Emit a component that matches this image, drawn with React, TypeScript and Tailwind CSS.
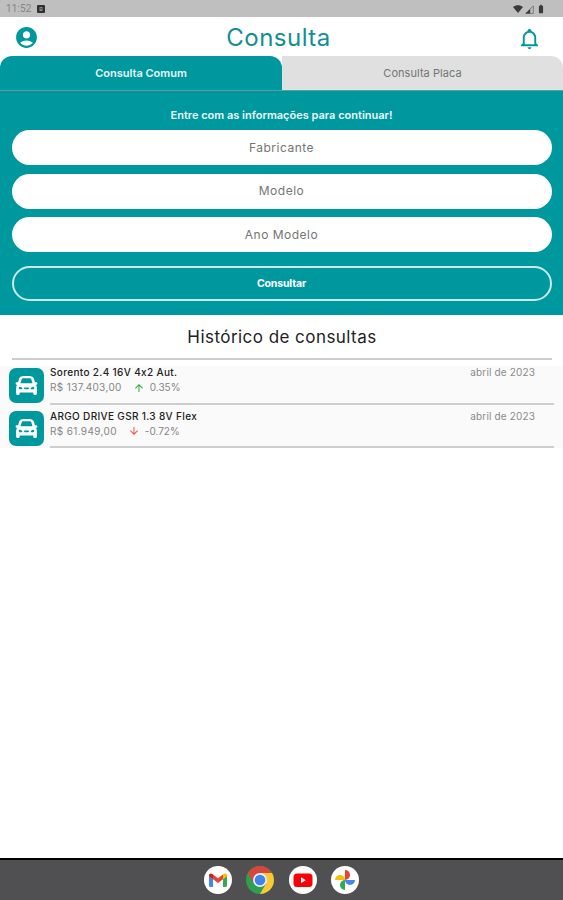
import React from 'react';
import { MdAccountCircle, MdBatteryFull, MdArrowUpward, MdArrowDownward } from 'react-icons/md';

interface HistoryItem {
  name: string;
  price: string;
  change: string;
  up: boolean;
  date: string;
}

const history: HistoryItem[] = [
  { name: 'Sorento 2.4 16V 4x2 Aut.', price: 'R$ 137.403,00', change: '0.35%', up: true, date: 'abril de 2023' },
  { name: 'ARGO DRIVE GSR 1.3 8V Flex', price: 'R$ 61.949,00', change: '-0.72%', up: false, date: 'abril de 2023' },
];

const fields = ['Fabricante', 'Modelo', 'Ano Modelo'];

const StatusBar = () => (
  <div className="flex h-[17px] items-center justify-between bg-[#bfbfbf] pl-[6px] pr-[17px] pt-px">
    <div className="flex items-center gap-[6px]">
      <span className="font-['Roboto',sans-serif] text-[10px] leading-none tracking-[0.1px] text-[#858585]">11:52</span>
      <svg viewBox="0 0 8 8" className="h-2 w-2">
        <rect width="8" height="8" rx="1" fill="#303030" />
        <path d="M2.5 2h3v4h-3z" fill="#8a8a8a" />
        <path d="M3.3 3.2h1.4v1H3.3z" fill="#303030" />
      </svg>
    </div>
    <div className="flex items-center text-[#3a3a3a]">
      <svg viewBox="0 0 10 8" className="h-2 w-[10px]">
        <path d="M0 2C3-.5 7-.5 10 2L5 8z" fill="#3a3a3a" />
      </svg>
      <svg viewBox="0 0 9 9" className="ml-[2px] h-[9px] w-[9px]">
        <path d="M.8 8.4 8.3.9v7.5z" fill="none" stroke="#6a6a6a" strokeWidth=".8" />
        <path d="M.5 8.5 5.2 4v4.5z" fill="#3a3a3a" />
      </svg>
      <MdBatteryFull className="ml-[2px] h-[10px] w-[10px]" />
    </div>
  </div>
);

const Header = () => (
  <header className="flex h-[39px] items-center justify-between pl-[14px] pr-[22px]">
    <MdAccountCircle className="mt-px h-[25px] w-[25px] text-[#00989f]" />
    <h1 className="pt-[2px] text-[24px] leading-none tracking-[0.5px] text-[#128e94]">Consulta</h1>
    <svg viewBox="0 0 24 24" className="mt-1 h-[23px] w-[23px] text-[#00989f]" fill="currentColor">
      <path d="M10 21h4c0 1.1-.9 2-2 2s-2-.9-2-2m11-2v1H3v-1l2-2v-6c0-3.1 2.03-5.83 5-6.71V4a2 2 0 0 1 4 0v.29c2.97.88 5 3.61 5 6.71v6l2 2m-4-8a5 5 0 0 0-10 0v7h10z" />
    </svg>
  </header>
);

const Tabs = () => (
  <div className="flex h-[35px] overflow-hidden rounded-tr-xl border-b border-[#58a0a4] bg-[#e0e0e0] text-[11px]">
    <div className="w-[282px] bg-white">
      <div className="flex h-full items-center justify-center rounded-t-xl bg-[#00989f] font-semibold text-[#e6f5f5]">
        <span>Consulta Comum</span>
      </div>
    </div>
    <div className="flex flex-1 items-center justify-center text-[#757575]">
      <span className="tracking-[0.05px]">Consulta Placa</span>
    </div>
  </div>
);

const SearchForm = () => (
  <section className="flex h-[224px] flex-col bg-[#00989f] px-[11.5px] pt-[17px] text-center">
    <p className="text-[11px] font-semibold leading-[14px] text-[#e9f7f7]">Entre com as informações para continuar!</p>
    <div className="mt-2 flex flex-col gap-[8.5px]">
      {fields.map((field) => (
        <button key={field} className="h-[35px] rounded-full bg-white text-[12px] tracking-[0.5px] text-[#757575]">
          {field}
        </button>
      ))}
    </div>
    <button className="mt-[14px] h-[35px] rounded-full border-2 border-[#c8e9ea] text-[10.5px] font-bold tracking-[-0.15px] text-white">
      Consultar
    </button>
  </section>
);

const CarIcon = () => (
  <div className="flex h-[35px] w-[35px] shrink-0 items-center justify-center rounded-[7px] bg-[#00989f]">
    <svg viewBox="0 0 24 22" className="h-[21px] w-[23px]">
      <path
        fillRule="evenodd"
        fill="#fff"
        d="M9 1h6c2.600 0 4.200 1.100 4.900 3.300l.9 3.200h1.100c.9 0 1.500.5 1.500 1.300s-.5 1.300-1.300 1.300h-.3c.7 1 1.100 2.100 1.100 3.400V19c0 1.300-.7 2-1.900 2s-1.900-.7-1.900-2v-.6H4.900v.6c0 1.300-.7 2-1.900 2s-1.900-.7-1.900-2v-5.500c0-1.300.4-2.400 1.100-3.400h-.3C1.100 10.100.6 9.600.6 8.800s.6-1.300 1.500-1.300h1.100l.9-3.200C4.800 2.100 6.400 1 9 1zm.1 2.400c-1.300 0-2 .5-2.300 1.500L5.700 8.600h12.600l-1.100-3.700c-.3-1-1-1.500-2.300-1.500zM5.200 12.200a1.300 1.300 0 0 0 0 2.600h1.700c.7 0 .9-.6.5-1.200-.5-.8-1.300-1.300-2.200-1.400zm13.600 0c-.9.1-1.700.6-2.200 1.400-.4.6-.2 1.200.5 1.200h1.700a1.300 1.300 0 0 0 0-2.600zM10.200 13c-.6 0-.9.4-.9.900s.3.900.9.900h3.600c.6 0 .9-.4.9-.9s-.3-.9-.9-.9z"
      />
    </svg>
  </div>
);

const HistoryRow = ({ item }: { item: HistoryItem }) => (
  <div className="flex h-[43.5px] pl-[9px] pr-[9px]">
    <div className="pt-[1.5px]">
      <CarIcon />
    </div>
    <div className="ml-[6px] h-[38.5px] flex-1 border-b-2 border-[#cecece]">
      <div className="flex justify-between pr-[19px] text-[10px] leading-[13px]">
        <span className="font-medium tracking-[0.34px] text-[#222] [font-feature-settings:'calt'_0]">{item.name}</span>
        <span className="tracking-[0.15px] text-[#8a8a8a]">{item.date}</span>
      </div>
      <div className="flex items-center pt-px text-[10px] leading-[15px] text-[#858585]">
        <span className="tracking-[0.35px]">{item.price}</span>
        {item.up ? (
          <MdArrowUpward className="ml-[11px] h-3 w-3 text-[#2fae43]" />
        ) : (
          <MdArrowDownward className="ml-[11px] h-3 w-3 text-[#f0524a]" />
        )}
        <span className="ml-[5px]">{item.change}</span>
      </div>
    </div>
  </div>
);

const GmailIcon = () => (
  <svg viewBox="0 0 28 28" className="h-7 w-7">
    <circle cx="14" cy="14" r="14" fill="#fff" />
    <path d="M5 10v9.5c0 .8.6 1.5 1.5 1.5H9v-8z" fill="#4285f4" />
    <path d="M23 10v9.5c0 .8-.6 1.5-1.5 1.500H19v-8z" fill="#34a853" />
    <path d="M9 8.5v4.8l5 3.7 5-3.7V8.5l-5 3.7z" fill="#ea4335" />
    <path d="M5 9.5c0-2 2.3-2.6 4-1v4.8l-4-3z" fill="#c5221f" />
    <path d="M23 9.5c0-2-2.3-2.600-4-1v4.800l4-3z" fill="#fbbc04" />
  </svg>
);

const ChromeIcon = () => (
  <svg viewBox="0 0 28 28" className="h-7 w-7">
    <circle cx="14" cy="14" r="14" fill="#2f9e4f" />
    <path d="M14 14V7h12.1A14 14 0 0 0 1.9 7L7.9 17.5z" fill="#d8453a" />
    <path d="M14 7h12.1A14 14 0 0 1 14 28l6.1-10.5z" fill="#fcc934" />
    <circle cx="14" cy="14" r="7" fill="#e9eef5" />
    <circle cx="14" cy="14" r="5.3" fill="#3f83ee" />
  </svg>
);

const YoutubeIcon = () => (
  <svg viewBox="0 0 28 28" className="h-7 w-7">
    <circle cx="14" cy="14" r="14" fill="#fff" />
    <rect x="4.5" y="7.5" width="19" height="13.5" rx="3.5" fill="#fb0007" />
    <path d="m12 11.300 5 2.900-5 2.900z" fill="#fff" />
  </svg>
);

const PhotosIcon = () => (
  <svg viewBox="0 0 28 28" className="h-7 w-7">
    <circle cx="14" cy="14" r="14" fill="#fff" />
    <path d="M14 4a5 5 0 0 1 0 10z" fill="#ea4335" />
    <path d="M24 14a5 5 0 0 1-10 0z" fill="#4285f4" />
    <path d="M14 24a5 5 0 0 1 0-10z" fill="#34a853" />
    <path d="M4 14a5 5 0 0 1 10 0z" fill="#fbbc04" />
  </svg>
);

const Dock = () => (
  <footer className="flex h-[42px] items-center justify-center gap-[14.5px] border-t-2 border-black bg-[#505052]">
    <GmailIcon />
    <ChromeIcon />
    <YoutubeIcon />
    <PhotosIcon />
  </footer>
);

const App: React.FC = () => {
  return (
    <div className="flex h-[900px] w-full flex-col overflow-hidden bg-white font-['Inter',sans-serif]">
      <StatusBar />
      <Header />
      <Tabs />
      <SearchForm />
      <main className="flex-1">
        <div className="ml-3 mr-[11px] flex h-[45px] items-center justify-center border-b-2 border-[#cdcdcd] pt-[2px]">
          <h2 className="text-[17px] leading-none tracking-[0.45px] text-[#222]">Histórico de consultas</h2>
        </div>
        <div className="mt-[6px] h-[82px] bg-[#fafafa]">
          {history.map((item) => (
            <HistoryRow key={item.name} item={item} />
          ))}
        </div>
      </main>
      <Dock />
    </div>
  );
};

export default App;
